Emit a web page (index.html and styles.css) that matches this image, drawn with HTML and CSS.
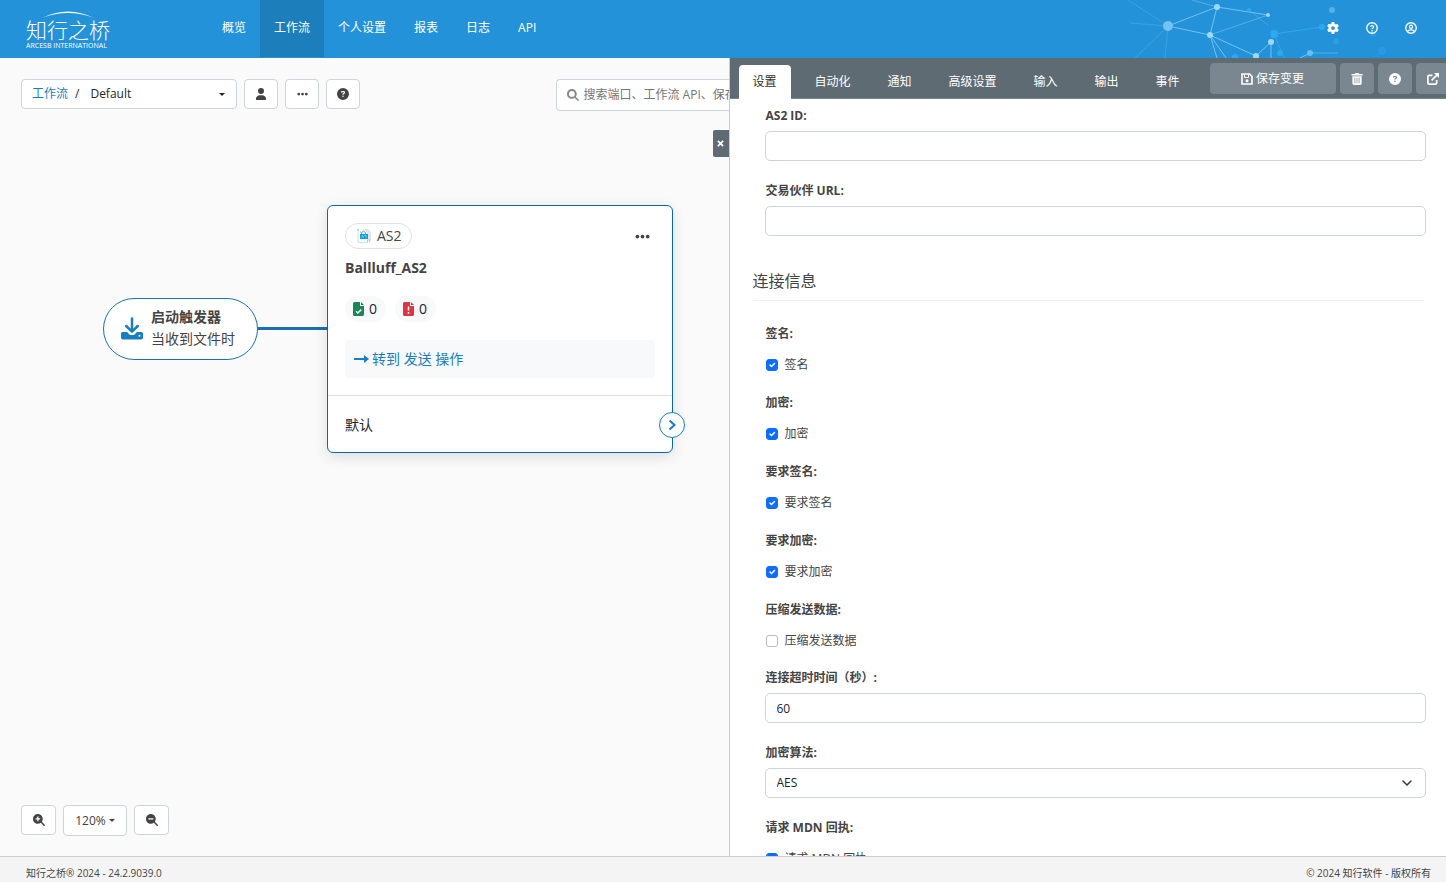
FILE: index.html
```html
<!DOCTYPE html>
<html lang="zh-CN">
<head>
<meta charset="utf-8">
<title>知行之桥 - 工作流</title>
<link rel="stylesheet" href="styles.css">
</head>
<body>
<svg class="sprite" aria-hidden="true">
  <symbol id="i-user" viewBox="0 0 448 512"><path d="M224 256A128 128 0 1 0 224 0a128 128 0 1 0 0 256zm-45.700 48C79.800 304 0 383.800 0 482.300C0 498.700 13.300 512 29.700 512H418.300c16.400 0 29.700-13.300 29.700-29.700C448 383.800 368.200 304 269.700 304H178.300z"/></symbol>
  <symbol id="i-help" viewBox="0 0 512 512"><path d="M256 512A256 256 0 1 0 256 0a256 256 0 1 0 0 512zM169.800 165.300c7.900-22.300 29.100-37.300 52.800-37.300h58.300c34.900 0 63.100 28.300 63.100 63.100c0 22.600-12.100 43.500-31.700 54.800L280 264.400c-.2 13-10.900 23.600-24 23.600c-13.300 0-24-10.700-24-24V250.500c0-8.600 4.600-16.500 12.100-20.800l44.300-25.400c4.700-2.700 7.600-7.700 7.600-13.100c0-8.400-6.800-15.100-15.100-15.100H222.600c-3.400 0-6.400 2.100-7.500 5.300l-.4 1.200c-4.400 12.500-18.200 19-30.600 14.600s-19-18.200-14.600-30.600l.4-1.200zM224 352a32 32 0 1 1 64 0 32 32 0 1 1 -64 0z"/></symbol>
  <symbol id="i-dots" viewBox="0 0 16 16"><circle cx="2.500" cy="8" r="2"/><circle cx="8" cy="8" r="2"/><circle cx="13.500" cy="8" r="2"/></symbol>
  <symbol id="i-search" viewBox="0 0 512 512"><path fill-rule="evenodd" d="M416 208c0 45.900-14.900 88.300-40 122.700L502.600 457.400c12.500 12.500 12.500 32.800 0 45.300s-32.800 12.500-45.300 0L330.700 376c-34.400 25.200-76.800 40-122.700 40C93.100 416 0 322.900 0 208S93.100 0 208 0S416 93.100 416 208zM208 332a124 124 0 1 0 0-248 124 124 0 1 0 0 248z"/></symbol>
  <symbol id="i-lens" viewBox="0 0 512 512"><path d="M416 208c0 45.900-14.900 88.300-40 122.700L502.600 457.400c12.500 12.500 12.500 32.800 0 45.300s-32.800 12.500-45.300 0L330.700 376c-34.400 25.200-76.800 40-122.700 40C93.100 416 0 322.900 0 208S93.100 0 208 0S416 93.100 416 208z"/></symbol>
  <symbol id="i-gear" viewBox="0 0 512 512"><path d="M495.900 166.600c3.200 8.700 .5 18.400-6.400 24.600l-43.300 39.400c1.100 8.300 1.700 16.800 1.700 25.400s-.6 17.100-1.700 25.400l43.300 39.400c6.900 6.200 9.600 15.900 6.400 24.600c-4.400 11.900-9.700 23.300-15.800 34.300l-4.700 8.100c-6.600 11-14 21.400-22.100 31.200c-5.900 7.200-15.700 9.600-24.500 6.800l-55.700-17.700c-13.400 10.300-28.200 18.900-44 25.400l-12.500 57.100c-2 9.100-9 16.300-18.200 17.800c-13.800 2.300-28 3.500-42.500 3.500s-28.700-1.200-42.500-3.500c-9.200-1.500-16.200-8.700-18.200-17.800l-12.500-57.100c-15.800-6.500-30.600-15.100-44-25.400L83.100 425.900c-8.800 2.800-18.600 .3-24.500-6.800c-8.100-9.800-15.500-20.200-22.100-31.200l-4.700-8.100c-6.100-11-11.400-22.400-15.800-34.300c-3.200-8.700-.5-18.400 6.400-24.600l43.300-39.400C64.600 273.100 64 264.600 64 256s.6-17.100 1.700-25.400L22.400 191.200c-6.900-6.200-9.600-15.900-6.400-24.600c4.400-11.900 9.700-23.300 15.800-34.300l4.700-8.100c6.600-11 14-21.400 22.100-31.200c5.900-7.200 15.700-9.600 24.500-6.800l55.700 17.700c13.400-10.300 28.200-18.900 44-25.400l12.500-57.100c2-9.100 9-16.300 18.200-17.800C227.300 1.200 241.500 0 256 0s28.700 1.200 42.500 3.500c9.200 1.500 16.200 8.700 18.200 17.800l12.500 57.100c15.800 6.500 30.600 15.100 44 25.400l55.700-17.700c8.800-2.800 18.600-.3 24.500 6.800c8.100 9.800 15.500 20.200 22.100 31.200l4.700 8.100c6.100 11 11.400 22.400 15.800 34.300zM256 336a80 80 0 1 0 0-160 80 80 0 1 0 0 160z"/></symbol>
</svg>

<header class="topbar">
  <svg class="topbar-art" viewBox="0 0 326 58" aria-hidden="true">
    <g stroke="#8fd0f7" stroke-width="1" fill="none">
      <path opacity=".75" d="M48 26 97 7M48 26l42 9M97 7 90 35M97 7l51 8M90 35l46 21M90 35l7 23M90 35l16 23M136 56l15-14v16M190 53l-10 5"/>
      <path opacity=".45" d="M97 7 72 0M90 35l58-20M190 53h28"/>
      <path opacity=".25" d="M48 26 8 0M48 26 10 23M48 26 15 58M48 26l-3 32M129 10l20 16M154 34l10 24"/>
    </g>
    <path stroke="#2fb0f5" opacity=".8" d="m154 34 48-7"/>
    <g fill="#2aa9f0"><circle cx="129" cy="10" r="2"/><circle cx="154" cy="34" r="4"/><circle cx="202" cy="27" r="3"/><circle cx="160" cy="53" r="3"/><circle cx="115" cy="57" r="3"/><circle cx="216" cy="41" r="3" opacity=".6"/><circle cx="262" cy="51" r="4" opacity=".4"/><circle cx="253" cy="34" r="3" opacity=".5"/></g>
    <circle cx="48" cy="26" r="5" fill="#74c3f1"/>
    <g fill="#9dd8fa"><circle cx="97" cy="7" r="3"/><circle cx="90" cy="35" r="3"/><circle cx="148" cy="15" r="2"/><circle cx="151" cy="42" r="3"/><circle cx="136" cy="56" r="3"/></g>
    <g fill="#6abdf0"><circle cx="190" cy="53" r="3"/><circle cx="212" cy="10" r="3" opacity=".7"/></g>
  </svg>
  <a class="logo" href="#">
    <svg class="logo-arc" viewBox="0 0 54 8" aria-hidden="true"><path d="M1 7Q27-6 53 7 27-3 1 7z" fill="#fff"/></svg>
    <span class="logo-name">知行之桥</span>
    <span class="logo-sub">ARCESB INTERNATIONAL</span>
  </a>
  <nav class="mainnav">
    <a href="#">概览</a>
    <a href="#" class="is-active">工作流</a>
    <a href="#">个人设置</a>
    <a href="#">报表</a>
    <a href="#">日志</a>
    <a href="#">API</a>
  </nav>
  <div class="top-actions">
    <button aria-label="设置"><svg viewBox="0 0 512 512"><use href="#i-gear"/></svg></button>
    <button aria-label="帮助"><svg viewBox="0 0 16 16"><circle cx="8" cy="8" r="7" fill="none" stroke="currentColor" stroke-width="1.800"/><path d="M5.900 6.400C6 4.200 10.200 4.200 10.200 6.500 10.200 7.900 8.100 7.900 8.100 9.500" fill="none" stroke="currentColor" stroke-width="1.600"/><circle cx="8.100" cy="11.500" r="1"/></svg></button>
    <button aria-label="账户"><svg viewBox="0 0 16 16"><circle cx="8" cy="8" r="7" fill="none" stroke="currentColor" stroke-width="1.800"/><circle cx="8" cy="6.300" r="2.100" fill="none" stroke="currentColor" stroke-width="1.600"/><path d="M3.600 13c.6-3.300 8.200-3.300 8.800 0" fill="none" stroke="currentColor" stroke-width="1.800"/></svg></button>
  </div>
</header>

<main class="workspace">
  <section class="flow">
    <div class="toolbar">
      <div class="crumb">
        <a href="#">工作流</a><span class="slash">/</span>
        <select aria-label="工作区"><option>Default</option></select>
        <svg class="caret" viewBox="0 0 6 3" aria-hidden="true"><path d="M0 0h6L3 3z"/></svg>
      </div>
      <button class="btn" aria-label="用户"><svg class="ico" viewBox="0 0 448 512"><use href="#i-user"/></svg></button>
      <button class="btn" aria-label="更多"><svg class="ico ico-sm" viewBox="0 0 16 16"><use href="#i-dots"/></svg></button>
      <button class="btn" aria-label="帮助"><svg class="ico" viewBox="0 0 512 512"><use href="#i-help"/></svg></button>
      <label class="search">
        <svg class="ico" viewBox="0 0 512 512"><use href="#i-search"/></svg>
        <input type="text" aria-label="搜索" placeholder="搜索端口、工作流 API、保存的消息">
      </label>
    </div>

    <button class="panel-close" aria-label="关闭"><svg viewBox="0 0 8 8"><path d="m1 1 6 6M7 1 1 7" stroke="#fff" stroke-width="2"/></svg></button>

    <div class="link-line"></div>
    <div class="trigger">
      <svg viewBox="0 0 22 23" aria-hidden="true"><path d="M1.500 15H6l3 3h4l3-3h4.500q1.500 0 1.500 1.500v4q0 2-2 2H2q-2 0-2-2v-4Q0 15 1.500 15z"/><path d="M11 1.500V14M5.200 9 11 14.700 16.800 9" fill="none" stroke="#fff" stroke-width="5"/><path d="M11 1.500V14M5.200 9 11 14.700 16.800 9" fill="none" stroke="currentColor" stroke-width="2.500" stroke-linecap="round" stroke-linejoin="round"/><circle cx="18.500" cy="18.700" r="1" fill="#fff"/></svg>
      <div><strong>启动触发器</strong><span>当收到文件时</span></div>
    </div>

    <article class="card">
      <div class="card-body">
        <div class="card-head">
          <span class="pill"><svg viewBox="0 0 14 14" aria-hidden="true"><path d="M5 0h6l3 3v9h-3V4z" fill="#e3e5ea"/><path d="M1 2v11.500h9.500V4" fill="none" stroke="#bfe6f8" stroke-width="1"/><path d="M4.500 5V3.500q2-2.500 4 0V5" fill="none" stroke="#3ab1e2"/><path d="M3 5h8v5H3z" fill="#169bd7"/><path d="M4.500 8.500 5.500 6.500l1 2M7.500 6.500h1.500v2" fill="none" stroke="#a8def5" stroke-width=".7"/><path d="M0 1h2M3 3h1M10 12h1M12 13h1M12 11h1" stroke="#5fc1e9"/></svg>AS2</span>
          <button class="card-menu" aria-label="更多"><svg viewBox="0 0 16 16"><use href="#i-dots"/></svg></button>
        </div>
        <h2>Ballluff_AS2</h2>
        <div class="counts">
          <span class="count"><svg viewBox="0 0 11 14" aria-hidden="true"><path d="M1.500 0H7v4h4v8.500q0 1.500-1.500 1.500h-8Q0 14 0 12.500v-11Q0 0 1.500 0zM8 0l3 3H8z" fill="#198754"/><path d="m3 9.300 1.800 1.700L8.300 7.600" fill="none" stroke="#fff" stroke-width="1.500"/></svg>0</span>
          <span class="count"><svg viewBox="0 0 11 14" aria-hidden="true"><path d="M1.500 0H7v4h4v8.500q0 1.500-1.500 1.500h-8Q0 14 0 12.500v-11Q0 0 1.500 0zM8 0l3 3H8z" fill="#dc3545"/><path d="M5.500 4.500v4M5.500 10v1.700" stroke="#fff" stroke-width="1.500"/></svg>0</span>
        </div>
        <a class="goto" href="#"><svg viewBox="0 0 15 8" aria-hidden="true"><path d="M0 3h10V0l5 4-5 4V5H0z"/></svg>转到 发送 操作</a>
      </div>
      <div class="card-foot">默认</div>
      <button class="port" aria-label="连接"><svg viewBox="0 0 8 12"><path d="m1.500 1.500 5 4.500-5 4.500" fill="none" stroke="currentColor" stroke-width="2"/></svg></button>
    </article>

    <div class="zoombar">
      <button class="btn" aria-label="放大"><svg class="ico" viewBox="0 0 512 512"><use href="#i-lens"/><path d="M208 110v196M110 208h196" stroke="#fff" stroke-width="54"/></svg></button>
      <button class="btn btn-zoom">120%<svg class="caret" viewBox="0 0 6 3" aria-hidden="true"><path d="M0 0h6L3 3z"/></svg></button>
      <button class="btn" aria-label="缩小"><svg class="ico" viewBox="0 0 512 512"><use href="#i-lens"/><path d="M100 208h216" stroke="#fff" stroke-width="54"/></svg></button>
    </div>
  </section>

  <section class="panel">
    <div class="tabbar">
      <nav class="tabs">
        <a href="#" class="is-active">设置</a>
        <a href="#">自动化</a>
        <a href="#">通知</a>
        <a href="#">高级设置</a>
        <a href="#">输入</a>
        <a href="#">输出</a>
        <a href="#">事件</a>
      </nav>
      <div class="tab-actions">
        <button class="save"><svg viewBox="0 0 12 12"><path d="M1.500 1h7L11 3.500v7.500H1V1z" fill="none" stroke="currentColor" stroke-width="1.600"/><path d="M3.500 1.500v3h4v-3" fill="none" stroke="currentColor"/><circle cx="6" cy="7.700" r="1.500"/></svg>保存变更</button>
        <button aria-label="删除"><svg viewBox="0 0 12 13"><path d="M0 1.200h3.500L4.300 0h3.400l.8 1.200H12v1.600H0zM1 3.500h10V11.500Q11 13 9.500 13h-7Q1 13 1 11.500z"/><path d="M3.700 5v6.200M6 5v6.200M8.300 5v6.200" stroke="#7a8790" stroke-width=".8"/></svg></button>
        <button aria-label="帮助"><svg viewBox="0 0 512 512"><use href="#i-help"/></svg></button>
        <button aria-label="新窗口打开"><svg viewBox="0 0 13 13"><path d="M6 2.500H2.500Q1 2.500 1 4v6.500Q1 12 2.500 12H9q1.500 0 1.500-1.500V7.500M5 8l6-6" fill="none" stroke="currentColor" stroke-width="1.800"/><path d="M7.500 0H13v5.500z"/></svg></button>
      </div>
    </div>
    <form class="form">
      <div class="field"><label for="as2id">AS2 ID:</label><input id="as2id" type="text"></div>
      <div class="field"><label for="url">交易伙伴 URL:</label><input id="url" type="text"></div>
      <h3>连接信息</h3>
      <div class="checks">
        <div class="check"><b>签名:</b><label><input type="checkbox" checked>签名</label></div>
        <div class="check"><b>加密:</b><label><input type="checkbox" checked>加密</label></div>
        <div class="check"><b>要求签名:</b><label><input type="checkbox" checked>要求签名</label></div>
        <div class="check"><b>要求加密:</b><label><input type="checkbox" checked>要求加密</label></div>
        <div class="check"><b>压缩发送数据:</b><label><input type="checkbox">压缩发送数据</label></div>
      </div>
      <div class="field"><label for="timeout">连接超时时间（秒）:</label><input id="timeout" type="text" value="60"></div>
      <div class="field"><label for="algo">加密算法:</label>
        <span class="select"><select id="algo"><option>AES</option></select><svg viewBox="0 0 10 6" aria-hidden="true"><path d="m1 1 4 4 4-4" fill="none" stroke="#343a40" stroke-width="1.500" stroke-linecap="round"/></svg></span></div>
      <div class="check"><b>请求 MDN 回执:</b><label><input type="checkbox" checked>请求 MDN 回执</label></div>
    </form>
  </section>
</main>

<footer class="footer"><span>知行之桥® 2024 - 24.2.9039.0</span><span>© 2024 知行软件 - 版权所有</span></footer>
</body>
</html>
```

FILE: styles.css
```css
* { box-sizing: border-box; }

body {
  margin: 0;
  height: 100vh;
  display: flex;
  flex-direction: column;
  overflow: hidden;
  background: #fafafa;
  color: #444;
  font: 12px/20px "Open Sans", "Noto Sans CJK SC", sans-serif;
}

a { color: #1a7dbd; text-decoration: none; }
button, input, select { font: inherit; color: inherit; margin: 0; }
button { padding: 0; border: 0; background: none; }
svg { display: block; fill: currentColor; flex: none; }
.sprite { position: absolute; width: 0; height: 0; }

/* top bar */
.topbar {
  position: relative;
  flex: none;
  display: flex;
  height: 58px;
  padding: 0 29px 0 26px;
  background: #2492d8;
  color: #fff;
}
.topbar-art { position: absolute; top: 0; right: 0; width: 326px; height: 58px; }
.logo {
  width: 182px;
  display: flex;
  flex-direction: column;
  color: #fff;
  padding-top: 11px;
}
.logo-arc { width: 54px; height: 8px; margin-left: 15px; }
.logo-name { font-size: 21px; line-height: 22px; font-weight: 300; }
.logo-sub { font-size: 7px; line-height: 10px; }
.mainnav { display: flex; height: 57px; }
.mainnav a { padding: 0 14px; line-height: 56px; color: #fff; }
.mainnav .is-active { background: #1c7ebb; }
.top-actions { position: relative; display: flex; align-items: center; gap: 27px; margin-left: auto; height: 55px; }
.top-actions svg { width: 12px; height: 12px; }

.workspace { flex: 1; min-height: 0; display: flex; }

/* flow canvas */
.flow {
  position: relative;
  flex: 729 1 0;
  min-width: 0;
  display: flex;
  flex-direction: column;
  justify-content: space-between;
  overflow: hidden;
}
.toolbar, .zoombar { display: flex; align-items: flex-start; gap: 7px; padding-left: 21px; }
.toolbar { padding-top: 21px; }
.zoombar { padding-bottom: 20px; }
.crumb, .btn, .search { border: 1px solid #ced4da; border-radius: 4px; background: #fff; }
.crumb {
  width: 216px;
  height: 30px;
  display: flex;
  align-items: center;
  padding: 0 11px 0 10px;
  color: #212529;
}
.slash { padding: 0 11px 0 7px; }
.crumb select { flex: 1; appearance: none; border: 0; background: none; padding: 0; }
.caret { width: 6px; height: 3px; }
.btn { width: 34px; height: 30px; display: flex; align-items: center; justify-content: center; }
.zoombar .btn { width: 35px; }
.zoombar .btn-zoom { width: 64px; height: 31px; gap: 3px; }
.ico { width: 12px; height: 12px; }
.ico-sm { width: 11px; }
.search {
  flex: none;
  width: 173px;
  height: 32px;
  margin-left: auto;
  display: flex;
  align-items: center;
  gap: 5px;
  padding-left: 10px;
  border-right: 0;
  border-radius: 4px 0 0 4px;
  color: #868686;
}
.search input { flex: 1; min-width: 0; border: 0; padding: 0; outline: 0; background: none; }
.search input::placeholder { color: #757575; opacity: 1; }

.panel-close {
  position: absolute;
  top: 72px;
  right: 0;
  width: 16px;
  height: 27px;
  display: grid;
  place-items: center;
  border-radius: 2px 0 0 2px;
  background: #5f6b73;
}
.panel-close svg { width: 7px; height: 7px; }

.link-line { position: absolute; left: 257px; top: 269px; width: 71px; height: 3px; background: #1b6fb0; }
.trigger {
  position: absolute;
  left: 103px;
  top: 240px;
  width: 155px;
  height: 62px;
  display: flex;
  align-items: center;
  gap: 8px;
  padding: 0 0 2px 17px;
  border: 1px solid #1a74ac;
  border-radius: 31px;
  background: #fff;
  font-size: 14px;
  line-height: 22px;
}
.trigger svg { width: 22px; height: 23px; color: #1a7dbd; }
.trigger strong, .trigger span { display: block; }

.card {
  position: absolute;
  left: 327px;
  top: 147px;
  width: 346px;
  border: 1px solid #0b66ad;
  border-radius: 6px;
  background: #fff;
  box-shadow: 0 4px 14px rgba(0, 0, 0, .12);
  font-size: 14px;
}
.card-body { padding: 17px; border-bottom: 1px solid #dee2e6; }
.card-head { display: flex; justify-content: space-between; align-items: center; }
.pill {
  height: 26px;
  display: flex;
  align-items: center;
  gap: 6px;
  padding: 0 9px 0 11px;
  border: 1px solid #dee2e6;
  border-radius: 13px;
}
.pill svg { width: 14px; height: 14px; }
.card-menu { padding: 0 5px; }
.card-menu svg { width: 15px; height: 15px; }
.card h2 { margin: 9px 0 18px; font-size: 14px; line-height: 20px; }
.counts { display: flex; gap: 9px; }
.count {
  width: 41px;
  height: 26px;
  display: flex;
  align-items: center;
  gap: 5px;
  padding-left: 8px;
  border-radius: 13px;
  background: #f8f9fa;
  color: #212529;
}
.count svg { width: 11px; height: 14px; }
.goto {
  height: 38px;
  display: flex;
  align-items: center;
  gap: 3px;
  margin-top: 18px;
  padding-left: 9px;
  border-radius: 4px;
  background: #f8f9fa;
}
.goto svg { width: 15px; height: 8px; }
.card-foot { padding: 19px 17px 17px; color: #212529; }
.port {
  position: absolute;
  right: -13px;
  bottom: 14px;
  width: 26px;
  height: 26px;
  display: grid;
  place-items: center;
  border: 1px solid #1a7dbd;
  border-radius: 50%;
  background: #fff;
  color: #1a7dbd;
}
.port svg { width: 8px; height: 12px; }

/* settings panel */
.panel {
  flex: 717 1 0;
  min-width: 0;
  display: flex;
  flex-direction: column;
  overflow: hidden;
  border-left: 1px solid #ccc;
  background: #fff;
}
.tabbar {
  flex: none;
  display: flex;
  height: 41px;
  padding: 5px 0 0 9px;
  background: #5f6b73;
  box-shadow: inset 0 -1px #7a8790;
  color: #fff;
  white-space: nowrap;
}
.tabs { display: flex; gap: 9px; padding-top: 2px; }
.tabs a { padding: 0 14px; line-height: 34px; color: #fff; border-radius: 4px 4px 0 0; }
.tabs .is-active { margin-right: 1px; background: #fff; color: #333; }
.tab-actions { display: flex; gap: 4px; margin-left: 16px; }
.tab-actions button {
  flex: none;
  width: 34px;
  height: 31px;
  display: flex;
  align-items: center;
  justify-content: center;
  gap: 3px;
  border-radius: 4px;
  background: #7a8790;
}
.tab-actions .save { width: 126px; }
.tab-actions svg { width: 12px; height: 12px; }

.form { flex: 1; min-height: 0; overflow: hidden; padding: 7px 20px 0 35px; }
.form b, .field label { display: block; font-weight: 700; }
.form b, .form label { margin-left: 1px; }
.field { margin-bottom: 20px; }
.field input, .field select {
  display: block;
  width: 100%;
  height: 30px;
  margin-top: 5px;
  padding: 0 11px;
  border: 1px solid #ced4da;
  border-radius: 5px;
  background: #fff;
  color: #212529;
}
.select { display: grid; align-items: end; }
.select select, .select svg { grid-area: 1 / 1; }
.field select { appearance: none; }
.select svg { width: 10px; height: 6px; justify-self: end; margin: 0 14px 12px 0; pointer-events: none; }
.form h3 {
  margin: 33px 2px 23px -12px;
  padding-bottom: 7px;
  border-bottom: 1px solid #eee;
  font-size: 16px;
  line-height: 24px;
  font-weight: 400;
}
.checks { display: grid; gap: 18px; margin-bottom: 17px; }
.check label { display: flex; align-items: center; gap: 7px; margin-top: 11px; }
.check input {
  appearance: none;
  width: 12px;
  height: 12px;
  border: 1px solid #bbb;
  border-radius: 3px;
  background: #fff;
}
.check input:checked {
  border-color: #0d6efd;
  background: #0d6efd url("data:image/svg+xml,%3Csvg xmlns='http://www.w3.org/2000/svg' viewBox='0 0 20 20'%3E%3Cpath fill='none' stroke='%23fff' stroke-linecap='round' stroke-linejoin='round' stroke-width='3' d='m6 10 3 3 6-6'/%3E%3C/svg%3E") center / 100% no-repeat;
}

/* footer */
.footer {
  flex: none;
  height: 26px;
  display: flex;
  justify-content: space-between;
  padding: 6px 15px 0 26px;
  border-top: 1px solid #ccc;
  background: #f4f4f4;
  font-size: 10px;
}
```
